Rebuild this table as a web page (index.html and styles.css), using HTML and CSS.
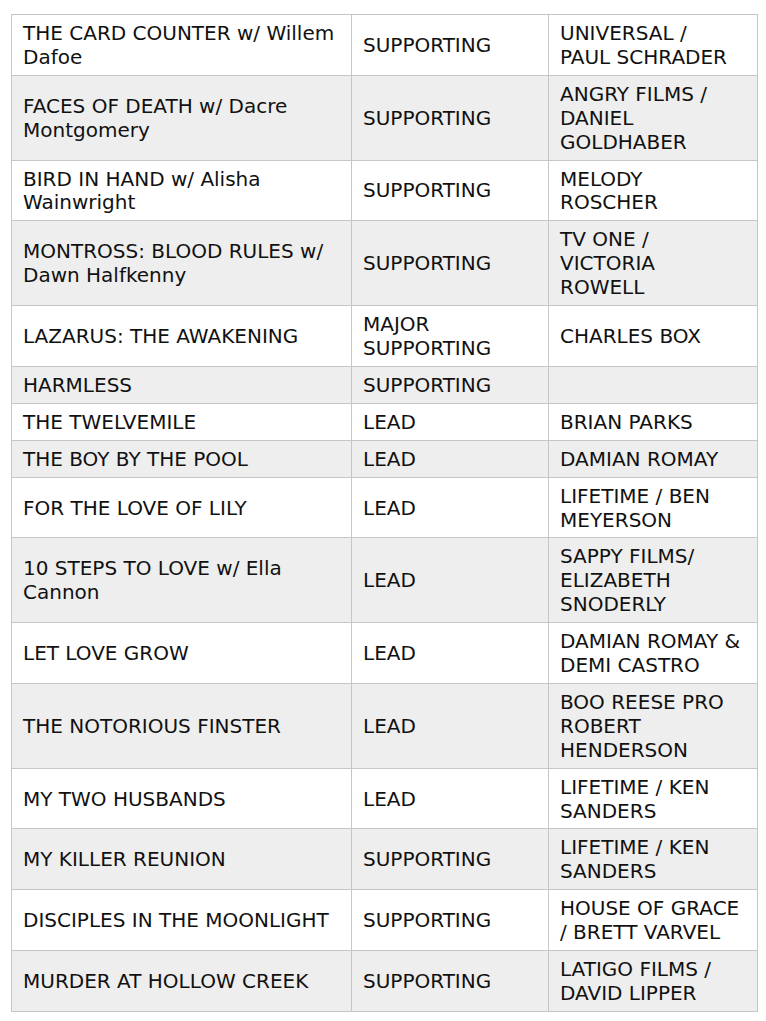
FILE: index.html
```html
<!DOCTYPE html>
<html>
<head>
<meta charset="utf-8">
<link rel="stylesheet" href="styles.css">
</head>
<body>
<table class="credits">
<colgroup><col class="c1"><col class="c2"><col class="c3"></colgroup>
<tbody>
<tr><td>THE CARD COUNTER w/ Willem<br>Dafoe</td><td>SUPPORTING</td><td>UNIVERSAL /<br>PAUL SCHRADER</td></tr>
<tr><td>FACES OF DEATH w/ Dacre<br>Montgomery</td><td>SUPPORTING</td><td>ANGRY FILMS /<br>DANIEL<br>GOLDHABER</td></tr>
<tr><td>BIRD IN HAND w/ Alisha<br>Wainwright</td><td>SUPPORTING</td><td>MELODY<br>ROSCHER</td></tr>
<tr><td>MONTROSS: BLOOD RULES w/<br>Dawn Halfkenny</td><td>SUPPORTING</td><td>TV ONE /<br>VICTORIA<br>ROWELL</td></tr>
<tr><td>LAZARUS: THE AWAKENING</td><td>MAJOR<br>SUPPORTING</td><td>CHARLES BOX</td></tr>
<tr><td>HARMLESS</td><td>SUPPORTING</td><td></td></tr>
<tr><td>THE TWELVEMILE</td><td>LEAD</td><td>BRIAN PARKS</td></tr>
<tr><td>THE BOY BY THE POOL</td><td>LEAD</td><td>DAMIAN ROMAY</td></tr>
<tr><td>FOR THE LOVE OF LILY</td><td>LEAD</td><td>LIFETIME / BEN<br>MEYERSON</td></tr>
<tr><td>10 STEPS TO LOVE w/ Ella<br>Cannon</td><td>LEAD</td><td>SAPPY FILMS/<br>ELIZABETH<br>SNODERLY</td></tr>
<tr><td>LET LOVE GROW</td><td>LEAD</td><td>DAMIAN ROMAY &amp;<br>DEMI CASTRO</td></tr>
<tr><td>THE NOTORIOUS FINSTER</td><td>LEAD</td><td>BOO REESE PRO<br>ROBERT<br>HENDERSON</td></tr>
<tr><td>MY TWO HUSBANDS</td><td>LEAD</td><td>LIFETIME / KEN<br>SANDERS</td></tr>
<tr><td>MY KILLER REUNION</td><td>SUPPORTING</td><td>LIFETIME / KEN<br>SANDERS</td></tr>
<tr><td>DISCIPLES IN THE MOONLIGHT</td><td>SUPPORTING</td><td>HOUSE OF GRACE<br>/ BRETT VARVEL</td></tr>
<tr><td>MURDER AT HOLLOW CREEK</td><td>SUPPORTING</td><td>LATIGO FILMS /<br>DAVID LIPPER</td></tr>
</tbody>
</table>
</body>
</html>
```
FILE: styles.css
```css
html, body {
  margin: 0;
  padding: 0;
  background: #ffffff;
}
body {
  padding: 14px 0 0 11px;
}
.credits {
  border-collapse: collapse;
  table-layout: fixed;
  width: 746px;
  font-family: "DejaVu Sans", Verdana, sans-serif;
  font-size: 20px;
  line-height: 23.9px;
  color: #111111;
}
.c1 { width: 340px; }
.c2 { width: 197px; }
.c3 { width: 209px; }
.credits td {
  border: 1px solid #c6c6c6;
  padding: 7px 11px 5px 11px;
  vertical-align: middle;
  white-space: nowrap;
  overflow: hidden;
}
.credits tr:nth-child(even) td {
  background: #eeeeee;
}
```
